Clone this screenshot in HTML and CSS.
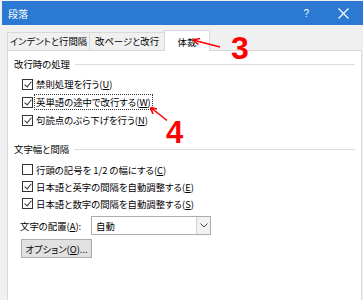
FILE: index.html
```html
<!DOCTYPE html>
<html lang="ja">
<head>
    <meta charset="UTF-8">
    <meta name="viewport" content="width=device-width, initial-scale=1.0">
    <title>段落</title>
    <link rel="stylesheet" href="styles.css">
</head>
<body>
    <div class="dialog">
        <div class="titlebar">
            <span class="title">段落</span>
            <span class="help">?</span>
            <svg class="close" width="11" height="11" viewBox="0 0 11 11">
                <path d="M0.5 0.5 L10.5 10.5 M10.5 0.5 L0.5 10.5" stroke="#fff" stroke-width="1.2"/>
            </svg>
        </div>

        <div class="tabs">
            <div class="tab tab-indent">インデントと行間隔</div>
            <div class="tab tab-break">改ページと改行</div>
            <div class="tab tab-layout active">体裁</div>
        </div>

        <div class="panel">
            <div class="group-title"><span>改行時の処理</span></div>
            <div class="check-list">
                <div class="check-row"><span class="box checked"></span><span>禁則処理を行う(<u>U</u>)</span></div>
                <div class="check-row"><span class="box checked"></span><span class="focus">英単語の途中で改行する(<u>W</u>)</span></div>
                <div class="check-row"><span class="box checked"></span><span>句読点のぶら下げを行う(<u>N</u>)</span></div>
            </div>

            <div class="group-title group-spacing"><span>文字幅と間隔</span></div>
            <div class="check-list tight">
                <div class="check-row"><span class="box"></span><span>行頭の記号を 1/2 の幅にする(<u>C</u>)</span></div>
                <div class="check-row"><span class="box checked"></span><span>日本語と英字の間隔を自動調整する(<u>E</u>)</span></div>
                <div class="check-row"><span class="box checked"></span><span>日本語と数字の間隔を自動調整する(<u>S</u>)</span></div>
            </div>

            <div class="align-row">
                <span class="align-label">文字の配置(<u>A</u>):</span>
                <div class="select">
                    <span class="select-value">自動</span>
                    <span class="select-arrow">
                        <svg width="8" height="5" viewBox="0 0 8 5">
                            <path d="M0.5 0.5 L4 4 L7.5 0.5" fill="none" stroke="#444" stroke-width="1"/>
                        </svg>
                    </span>
                </div>
            </div>

            <button class="option-button">オプション(<u>O</u>)...</button>
        </div>
    </div>

    <!-- annotations -->
    <div class="note note-3">3</div>
    <div class="note note-4">4</div>
    <svg class="arrows" width="363" height="300" viewBox="0 0 363 300">
        <path d="M220 47 L195 40.5" stroke="#f00" stroke-width="1.6" fill="none"/>
        <path d="M193 40 L200 38.5 M193 40 L198.5 44.5" stroke="#f00" stroke-width="1.6" fill="none"/>
        <path d="M167 120.5 L152 108.5" stroke="#f00" stroke-width="1.6" fill="none"/>
        <path d="M150.5 107.5 L157 109 M150.5 107.5 L153 114" stroke="#f00" stroke-width="1.6" fill="none"/>
    </svg>
</body>
</html>
```

FILE: styles.css
```css
/* Base */
body {
    margin: 0;
    width: 363px;
    height: 300px;
    overflow: hidden;
    background: #f0f0f0;
    font-family: "Noto Sans CJK JP", "Noto Sans", sans-serif;
    font-size: 9.4px;
    font-feature-settings: "palt";
    color: #000;
    position: relative;
    white-space: nowrap;
}

u {
    text-decoration: underline;
    text-underline-offset: 1px;
}

.dialog {
    padding-top: 1px;
}

/* Title bar */
.titlebar {
    margin-left: 2px;
    height: 24px;
    background: #2b79d3;
    color: #fff;
    display: flex;
    align-items: center;
    padding-left: 6px;
}

.title {
    flex: 1;
    font-size: 10px;
}

.help {
    font-family: "Liberation Sans", sans-serif;
    font-size: 10px;
    margin-right: 29px;
}

.close {
    margin-right: 14px;
}

/* Tabs */
.tabs {
    display: flex;
    align-items: flex-end;
    margin-top: 5px;
    padding-left: 7px;
    height: 20px;
}

.tab {
    height: 17px;
    line-height: 17px;
    text-align: center;
    border: 1px solid #d9d9d9;
    border-bottom: none;
    background: #f0f0f0;
    margin-right: -1px;
}

.tab-indent { width: 81px; }
.tab-break { width: 74px; }
.tab-layout { width: 44px; }

.tab.active {
    height: 20px;
    line-height: 22px;
    background: #fff;
    position: relative;
    z-index: 1;
    margin-bottom: -1px;
}

/* Panel */
.panel {
    margin-left: 7px;
    width: 347px;
    height: 246px;
    background: #fff;
    border: 1px solid #d9d9d9;
    padding: 6px 0 0 6px;
    box-sizing: content-box;
}

.group-title {
    display: flex;
    align-items: center;
    height: 14px;
    margin-right: 6px;
}

.group-title::after {
    content: "";
    flex: 1;
    border-top: 1px solid #dcdcdc;
    margin-left: 5px;
}

.group-spacing {
    margin-top: 13px;
}

.check-list {
    margin-top: 4px;
    padding-left: 8px;
}

.check-row {
    height: 18px;
    display: flex;
    align-items: center;
    gap: 3px;
}

.tight {
    margin-top: 5px;
}

.tight .check-row {
    height: 17px;
}

.box {
    width: 9px;
    height: 9px;
    border: 1px solid #333;
    background: #fff;
    flex-shrink: 0;
    position: relative;
}

.box.checked::after {
    content: "";
    position: absolute;
    left: 3px;
    top: 0px;
    width: 3px;
    height: 6px;
    border-right: 1px solid #333;
    border-bottom: 1px solid #333;
    transform: rotate(40deg);
}

.focus {
    outline: 1px dotted #333;
    outline-offset: 0;
    padding: 0 1px;
    margin-left: -1px;
}

/* Alignment select */
.align-row {
    display: flex;
    align-items: center;
    margin-top: 4px;
    padding-left: 6px;
    height: 19px;
}

.align-label {
    width: 71px;
}

.select {
    width: 118px;
    height: 17px;
    border: 1px solid #adadad;
    background: #fff;
    display: flex;
    align-items: center;
}

.select-value {
    flex: 1;
    padding-left: 4px;
}

.select-arrow {
    width: 13px;
    height: 17px;
    border-left: 1px solid #d0d0d0;
    background: #f2f2f2;
    display: flex;
    align-items: center;
    justify-content: center;
}

.option-button {
    display: block;
    margin: 4px 0 0 7px;
    width: 71px;
    height: 19px;
    padding: 0;
    background: #e1e1e1;
    border: 1px solid #adadad;
    font-family: inherit;
    font-size: 9.4px;
    font-feature-settings: "palt";
    color: #000;
    text-align: center;
}

/* Annotations */
.note {
    position: absolute;
    z-index: 2;
    font-family: "Liberation Sans", sans-serif;
    font-weight: bold;
    color: #f00;
    line-height: 1;
}

.note-3 {
    left: 231px;
    top: 32px;
    font-size: 32px;
}

.note-4 {
    left: 166px;
    top: 117px;
    font-size: 31px;
}

.arrows {
    position: absolute;
    z-index: 2;
    left: 0;
    top: 0;
    pointer-events: none;
}
```
